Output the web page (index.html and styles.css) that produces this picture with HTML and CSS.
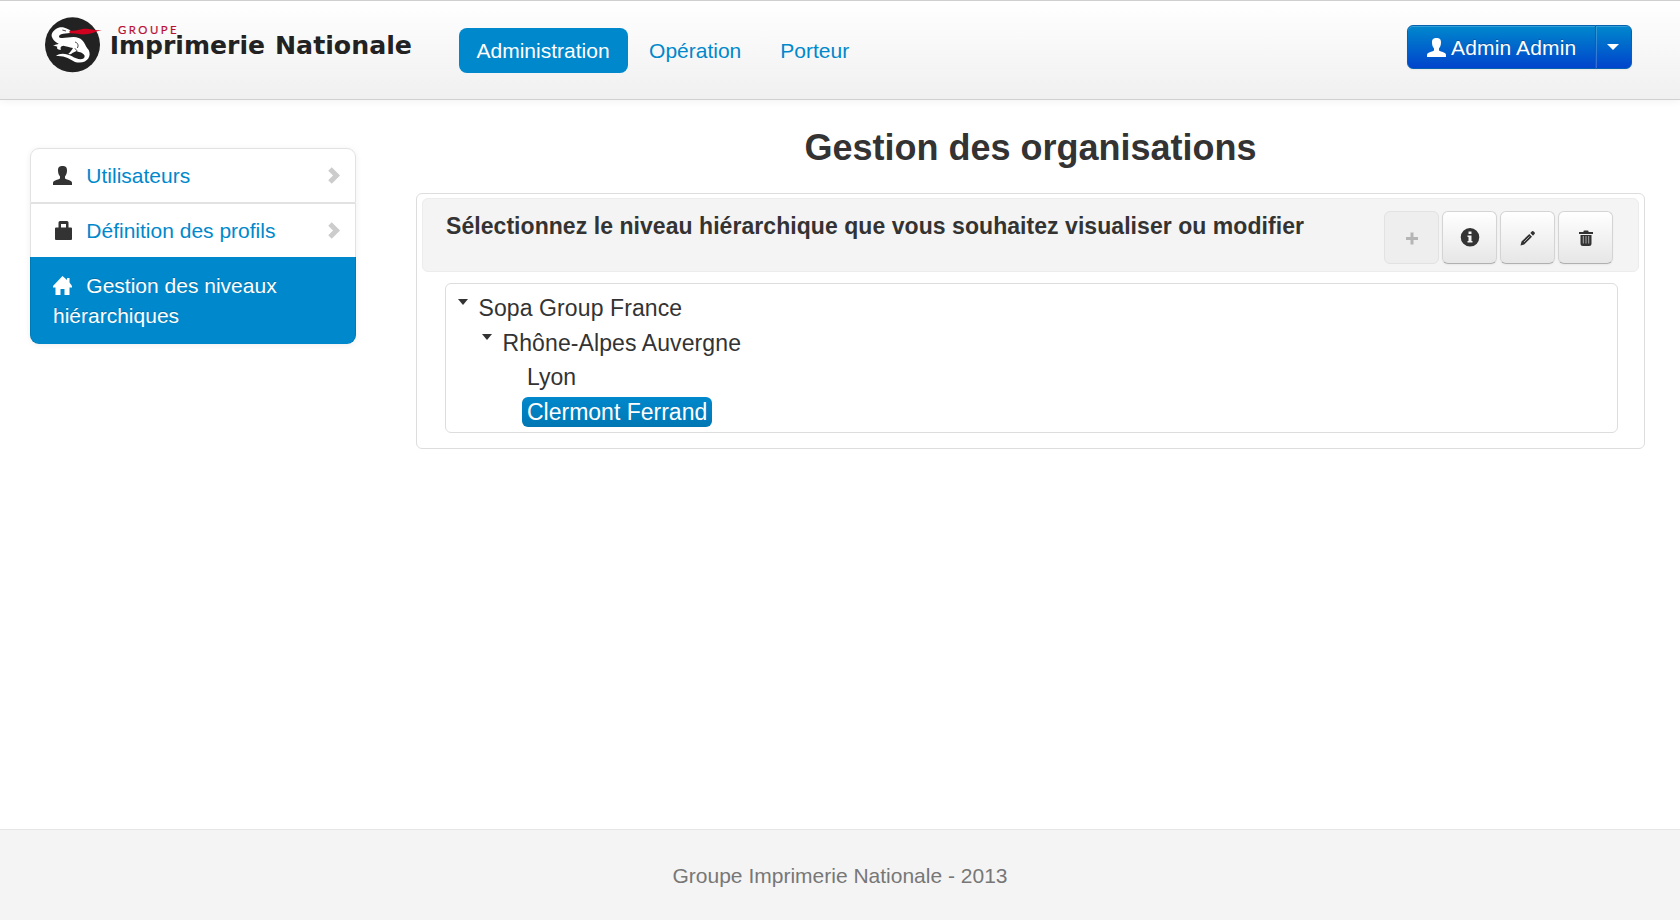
FILE: index.html
```html
<!DOCTYPE html>
<html lang="fr">
<head>
<meta charset="utf-8">
<title>Gestion des organisations</title>
<link rel="stylesheet" href="styles.css">
</head>
<body>
<header class="navbar">
  <svg class="logo" viewBox="0 0 1140 210" role="img" aria-label="Groupe Imprimerie Nationale">
    <circle cx="97.500" cy="104.500" r="82.500" fill="#222"/>
    <path fill="#fff" d="M35 79 C34 68 42 61 48 57 C56 50 70 50 78 55 L91 61 L90 69 L70 71 C60 72 54 78 59 83 C72 88 98 76 116 84 C132 89 134 106 146 120 C156 140 140 164 105 156 C90 147 74 136 48 138 C60 127 80 130 96 139 C112 150 134 151 134 138 C132 130 120 126 108 124 L97 129 C93 134 89 134 85 131 C90 128 95 121 99 114 C89 111 77 109 70 107 C62 108 60 112 63 119 C55 120 49 116 52 110 L39 106 C46 104 52 103 56 101 C44 96 38 88 35 79Z"/>
    <path fill="none" stroke="#222" stroke-width="2.500" d="M67 60 L78 63 M105 96 C113 98 117 106 112 114 M104 116 C112 119 113 126 104 129"/>
    <path fill="#d0021f" d="M88 62 C108 64 119 56 140 56 C155 57 165 61 186 61 C165 64 154 73 137 73 C117 74 108 69 89 70Z"/>
    <text class="logo-group" x="234" y="73" textLength="176">GROUPE</text>
    <text class="logo-name" x="209" y="133" textLength="466" lengthAdjust="spacingAndGlyphs">Imprimerie</text>
    <text class="logo-name" x="705" y="133" textLength="411" lengthAdjust="spacingAndGlyphs">Nationale</text>
  </svg>
  <nav class="nav">
    <a class="nav-link nav-link-active">Administration</a>
    <a class="nav-link">Opération</a>
    <a class="nav-link">Porteur</a>
  </nav>
  <div class="user-group">
    <button class="user-button">
      <svg class="icon" viewBox="0 0 19 19"><path d="M5 4.500C5 1 6.500 0 9.500 0S14 1 14 4.500C14 7 13.200 9 12 10.500V12.500C14 14 19 14 19 17V19H0V17C0 14 5 14 7 12.500V10.500C5.800 9 5 7 5 4.500Z"/></svg>
      <span class="user-name">Admin Admin</span>
    </button>
    <button class="user-toggle" aria-label="Menu"><span class="caret"></span></button>
  </div>
</header>

<div class="page">
  <aside class="sidebar">
    <a class="side-item side-first">
      <svg class="icon" viewBox="0 0 19 19"><path d="M5 4.500C5 1 6.500 0 9.500 0S14 1 14 4.500C14 7 13.200 9 12 10.500V12.500C14 14 19 14 19 17V19H0V17C0 14 5 14 7 12.500V10.500C5.800 9 5 7 5 4.500Z"/></svg>
      <span class="side-text">Utilisateurs</span>
      <svg class="chevron" viewBox="0 0 12 17"><path d="M2 2L8.500 8.500L2 15"/></svg>
    </a>
    <a class="side-item side-second">
      <svg class="icon" viewBox="0 0 19 19"><path fill-rule="evenodd" d="M5.500 6.500V1.500Q5.500 0 7 0H14Q15.500 0 15.500 1.500V6.500H18Q19 6.500 19 7.500V18Q19 19 18 19H3Q2 19 2 18V7.500Q2 6.500 3 6.500ZM8 6.500H13V3H8Z"/></svg>
      <span class="side-text">Définition des profils</span>
      <svg class="chevron" viewBox="0 0 12 17"><path d="M2 2L8.500 8.500L2 15"/></svg>
    </a>
    <a class="side-item side-active">
      <svg class="icon" viewBox="0 0 19 19"><path d="M9.500 0L14 4V2H16.500V6.500L19 10V11.500H16.500V19H11.500V13H7.500V19H2.500V11.500H0V10Z"/></svg>
      <span class="side-text">Gestion des niveaux hiérarchiques</span>
    </a>
  </aside>

  <main class="content">
    <h1 class="title">Gestion des organisations</h1>
    <section class="panel">
      <div class="panel-head">
        <h2 class="panel-title">Sélectionnez le niveau hiérarchique que vous souhaitez visualiser ou modifier</h2>
        <div class="tools">
          <button class="tool tool-disabled" aria-label="Ajouter"><svg class="tool-icon" viewBox="0 0 20 20"><path d="M8.500 4.500H11.500V9H16V12H11.500V16.500H8.500V12H4V9H8.500Z"/></svg></button>
          <button class="tool" aria-label="Informations"><svg class="tool-icon" viewBox="0 0 20 20"><path fill-rule="evenodd" d="M10 0A9.300 9.300 0 1 1 10 18.600A9.300 9.300 0 0 1 10 0ZM8.500 3.500V6H11.500V3.500ZM7.500 7.500V9H8.500V13H7.500V14.500H12.500V13H11.500V7.500Z"/></svg></button>
          <button class="tool" aria-label="Modifier"><svg class="tool-icon" viewBox="0 0 20 20"><path d="M2.500 17.500L3.500 13.500L11.300 6L14 8.800L6.200 16.500ZM12.300 5L14 3.300Q14.800 2.700 15.700 3.500L16.700 4.600Q17.200 5.300 16.500 6.100L15 7.700Z"/><path class="tool-line" d="M6 14L11.500 8.500"/></svg></button>
          <button class="tool" aria-label="Supprimer"><svg class="tool-icon" viewBox="0 0 20 20"><path d="M7.500 3Q7.500 2.500 8.500 2.500H11.500Q12.500 2.500 12.500 3V4H17V6H3V4H7.500ZM4.500 7H15.500V15.500Q15.500 18 13 18H7Q4.500 18 4.500 15.500Z"/><path class="tool-line" d="M7.300 8V15.500M10 8V15.500M12.700 8V15.500"/></svg></button>
        </div>
      </div>
      <div class="tree">
        <div class="node"><span class="caret"></span><span class="label">Sopa Group France</span></div>
        <div class="branch">
          <div class="node"><span class="caret"></span><span class="label">Rhône-Alpes Auvergne</span></div>
          <div class="branch">
            <div class="node leaf"><span class="label">Lyon</span></div>
            <div class="node leaf"><span class="label label-selected">Clermont Ferrand</span></div>
          </div>
        </div>
      </div>
    </section>
  </main>
</div>

<footer class="footer">Groupe Imprimerie Nationale - 2013</footer>
</body>
</html>
```
FILE: styles.css
```css
* { box-sizing: border-box; }

body {
  margin: 0;
  height: 920px;
  display: flex;
  flex-direction: column;
  overflow: hidden;
  background: #fff;
  color: #333;
  font: 21px/30px "Liberation Sans", Arial, sans-serif;
}

button { font: inherit; margin: 0; padding: 0; }

/* Top bar */
.navbar {
  height: 100px;
  flex: none;
  display: flex;
  align-items: flex-start;
  padding: 0 48px 0 40px;
  border-top: 1px solid #cfcfcf;
  border-bottom: 1px solid #d0d0d0;
  background: linear-gradient(#fff, #f0f0f0);
  box-shadow: 0 1px 8px rgba(0, 0, 0, .06);
}
.logo { width: 380px; height: 70px; margin-top: 9px; flex: none; }
.logo-group { font: 34px/1 Lato, "Open Sans", sans-serif; fill: #b80f35; stroke: #b80f35; stroke-width: .6; }
.logo-name { font: 700 74px/1 "DejaVu Sans", "Open Sans", sans-serif; fill: #222; }

.nav { display: flex; gap: 3px; margin: 27px 0 0 39px; }
.nav-link { height: 45px; padding: 8px 18px 7px; border-radius: 8px; color: #08c; }
.nav-link-active { padding: 8px 18.500px 7px 17.500px; background: #08c; color: #fff; }

.user-group { display: flex; margin: 24px 0 0 auto; height: 44px; }
.user-button, .user-toggle {
  display: flex;
  align-items: center;
  border: 1px solid #0562b0;
  color: #fff;
  background: linear-gradient(#08c, #04c);
  box-shadow: inset 0 1px 0 rgba(255, 255, 255, .2), 0 1px 2px rgba(0, 0, 0, .05);
  text-shadow: 0 -1px 0 rgba(0, 0, 0, .25);
}
.user-button { width: 189px; padding: 0 0 0 19px; gap: 5px; border-radius: 6px 0 0 6px; }
.user-name { padding-top: 2px; letter-spacing: .15px; }
.user-toggle {
  width: 37px;
  margin-left: -1px;
  justify-content: center;
  padding: 0 2px 1px 0;
  border-radius: 0 6px 6px 0;
  box-shadow: inset 1px 1px 0 rgba(255, 255, 255, .2), 0 1px 2px rgba(0, 0, 0, .05);
}

.icon { width: 19px; height: 19px; fill: currentColor; flex: none; }
.caret { border: 6px solid transparent; border-top-color: currentColor; border-bottom: 0; flex: none; }

/* Page body */
.page { flex: 1; display: flex; align-items: flex-start; padding: 0 35px 0 30px; }

.sidebar {
  width: 326px;
  margin-top: 48px;
  border-radius: 9px;
  box-shadow: 0 1px 6px rgba(0, 0, 0, .07);
}
.side-item {
  display: block;
  padding: 12px 22px 11px;
  border: 1px solid #e2e2e2;
  color: #08c;
}
.side-item .icon { color: #333; vertical-align: -2px; margin-right: 8.500px; }
.side-first { height: 55px; border-radius: 9px 9px 0 0; }
.side-second { height: 54px; border-bottom: 0; }
.side-active {
  height: 87px;
  padding: 14px 23px 13px;
  border: 0;
  border-radius: 0 0 9px 9px;
  background: #08c;
  box-shadow: inset 1px 0 0 rgba(0, 0, 0, .1), inset -1px 0 0 rgba(0, 0, 0, .1);
  color: #fff;
  text-shadow: 0 -1px 0 rgba(0, 0, 0, .2);
}
.side-item.side-active .icon { color: #fff; }
.chevron { float: right; width: 12px; height: 17px; margin: 6px -7px 0 0; fill: none; stroke: #ccc; stroke-width: 5; }

.content { width: 1229px; margin-left: auto; }
.title { margin: 24px 0 0; height: 69px; font-size: 36px; line-height: 48px; text-align: center; }

.panel { height: 256px; padding: 4px 5px; border: 1px solid #ddd; border-radius: 6px; }
.panel-head {
  height: 74px;
  display: flex;
  justify-content: space-between;
  padding: 12px 25px 0 23px;
  border: 1px solid #ececec;
  border-radius: 6px;
  background: #f4f4f4;
}
.panel-title { margin: 0; font-size: 23px; line-height: 30px; letter-spacing: .055px; white-space: nowrap; }
.tools { display: flex; gap: 2.500px; }
.tool {
  width: 55.500px;
  height: 53px;
  display: flex;
  align-items: center;
  justify-content: center;
  padding-left: 1px;
  border: 1px solid #d4d4d4;
  border-bottom-color: #b0b0b0;
  border-radius: 6px;
  background: linear-gradient(#fff, #e6e6e6);
  box-shadow: inset 0 1px 0 rgba(255, 255, 255, .2), 0 1px 2px rgba(0, 0, 0, .05);
  color: #333;
}
.tool-disabled { border-color: #e2e2e2; background: #eee; box-shadow: none; color: #b5b5b5; }
.tool-icon { width: 20px; height: 20px; fill: currentColor; }
.tool-line { fill: none; stroke: #aaa; stroke-width: 1; }

/* Organisation tree */
.tree {
  height: 150px;
  margin: 11px 21px 0 23px;
  padding: 7px 0 0 11px;
  border: 1px solid #ddd;
  border-radius: 6px;
  font-size: 23px;
}
.branch { padding-left: 24px; }
.node { display: flex; align-items: flex-start; height: 34.700px; }
.node > .caret { margin: 8px 5.500px 0 1px; border-width: 6px 5.500px 0; }
.node > .caret + .label { letter-spacing: .1px; }
.leaf { padding-left: 17px; }
.label { height: 30px; margin-top: 2px; padding: 0 5px; line-height: 31px; white-space: nowrap; }
.label-selected { border-radius: 6px; background: linear-gradient(#08c, #0077b3); color: #fff; }

.footer {
  height: 91px;
  flex: none;
  padding-top: 31px;
  border-top: 1px solid #e5e5e5;
  background: #f4f4f4;
  color: #777;
  text-align: center;
}
```
